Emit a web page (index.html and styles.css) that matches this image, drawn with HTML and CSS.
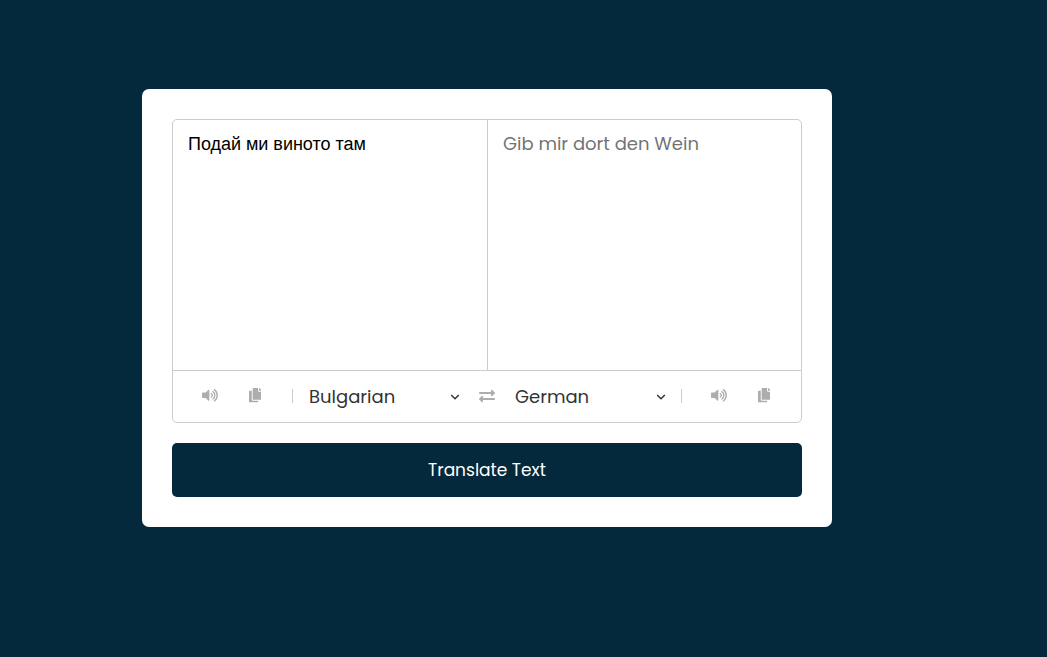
FILE: index.html
```
<!DOCTYPE html>
<html lang="en">
<head>
<meta charset="utf-8">
<title>Translator</title>
<link rel="stylesheet" href="styles.css">
</head>
<body>
<svg class="symbols" aria-hidden="true">
  <symbol id="volume" viewBox="0 0 576 512"><path d="M215.03 71.05 126.06 160H24c-13.26 0-24 10.74-24 24v144c0 13.25 10.74 24 24 24h102.06l88.97 88.95c15.03 15.03 40.97 4.47 40.97-16.97V88.02c0-21.46-25.96-31.98-40.97-16.97z"/><path class="wave" d="M325 196c48 26 48 94 0 120M380 126c94 58 94 202 0 260M433 57c133 94 133 304 0 398"/></symbol>
  <symbol id="copy" viewBox="0 0 448 512"><path d="M320 448v40c0 13.255-10.745 24-24 24H24c-13.255 0-24-10.745-24-24V120c0-13.255 10.745-24 24-24h72v296c0 30.879 25.121 56 56 56h168zm0-344V0H152c-13.255 0-24 10.745-24 24v368c0 13.255 10.745 24 24 24h272c13.255 0 24-10.745 24-24V128H344c-13.2 0-24-10.8-24-24zm120.971-31.029L375.029 7.029A24 24 0 0 0 358.059 0H352v96h96v-6.059a24 24 0 0 0-7.029-16.97z"/></symbol>
  <symbol id="exchange" viewBox="0 0 512 512"><path d="M0 168v-16c0-13.255 10.745-24 24-24h360V80c0-21.367 25.899-32.042 40.971-16.971l80 80c9.372 9.373 9.372 24.569 0 33.941l-80 80C409.956 271.982 384 261.456 384 240v-48H24c-13.255 0-24-10.745-24-24zm488 152H128v-48c0-21.314-25.862-32.08-40.971-16.971l-80 80c-9.372 9.373-9.372 24.569 0 33.941l80 80C102.057 463.997 128 453.437 128 432v-48h360c13.255 0 24-10.745 24-24v-16c0-13.255-10.745-24-24-24z"/></symbol>
  <symbol id="chevron" viewBox="0 0 10 8"><path class="chev" d="M1.2 2 5 5.8 8.8 2"/></symbol>
</svg>
<main class="container">
  <section class="wrapper">
    <div class="text-input">
      <div class="field from">Подай ми виното там</div>
      <div class="field to">Gib mir dort den Wein</div>
    </div>
    <div class="controls">
      <div class="icons left">
        <svg class="volume"><use href="#volume"/></svg>
        <svg class="copy"><use href="#copy"/></svg>
      </div>
      <div class="select"><span>Bulgarian</span><svg class="chevron"><use href="#chevron"/></svg></div>
      <svg class="exchange"><use href="#exchange"/></svg>
      <div class="select"><span>German</span><svg class="chevron"><use href="#chevron"/></svg></div>
      <div class="icons right">
        <svg class="volume"><use href="#volume"/></svg>
        <svg class="copy"><use href="#copy"/></svg>
      </div>
    </div>
  </section>
  <button class="translate">Translate Text</button>
</main>
</body>
</html>
```
FILE: styles.css
```
* { box-sizing: border-box; margin: 0; padding: 0; }
body {
  background: #05293c;
  font-family: Poppins, Inter, sans-serif;
  padding: 89px 0 0 142px;
}
.symbols { display: none; }
.container { width: 690px; height: 438px; padding: 30px; background: #fff; border-radius: 7px; }
.wrapper { height: 304px; border: 1px solid #ccc; border-radius: 5px; }
.text-input { display: flex; height: 251px; border-bottom: 1px solid #ccc; }
.field { padding: 10px 15px; font-size: 18px; line-height: 27px; white-space: nowrap; }
.from { width: 315px; padding-top: 11px; border-right: 1px solid #ccc; font-family: "Liberation Sans", Arial, sans-serif; color: #000; letter-spacing: -0.02px; }
.to { flex: 1; color: #737373; }
.controls { display: flex; align-items: center; height: 51px; }
.icons { display: flex; align-items: center; height: 14px; margin-bottom: 2px; color: #adadad; }
.left { width: 120px; padding-left: 29px; border-right: 1px solid #ccc; }
.right { margin-left: 15px; padding-left: 29px; border-left: 1px solid #ccc; }
svg { display: block; fill: currentColor; }
.volume { width: 16.5px; height: 14.6px; }
.copy { width: 12.8px; height: 14.6px; margin-left: 30px; }
.exchange { width: 16px; height: 16px; margin: 0 20px 2px 19px; color: #adadad; }
.wave { fill: none; stroke: currentColor; stroke-width: 46; stroke-linecap: round; }
.chev { fill: none; stroke: currentColor; stroke-width: 1.5; }
.chevron { width: 10px; height: 8px; }
.select { display: flex; align-items: center; justify-content: space-between; width: 151px; margin-left: 16px; font-size: 18px; line-height: 27px; color: #333; }
.exchange + .select { margin-left: 0; }
.translate { display: block; width: 100%; height: 54px; margin-top: 20px; border: 0; border-radius: 5px; background: #05293c; color: #fff; font: 17px/27px Poppins, Inter, sans-serif; }
```
